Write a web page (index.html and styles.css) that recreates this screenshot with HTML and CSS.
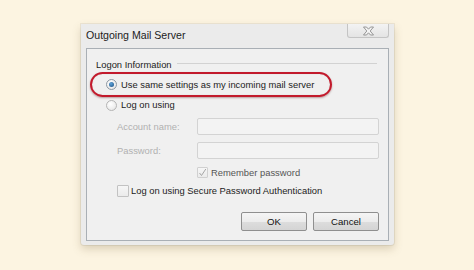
FILE: index.html
```html
<!DOCTYPE html>
<html lang="en">
<head>
    <meta charset="UTF-8">
    <meta name="viewport" content="width=device-width, initial-scale=1.0">
    <title>Outgoing Mail Server</title>
    <link rel="stylesheet" href="styles.css">
</head>
<body>
    <!-- Fenêtre de dialogue -->
    <div class="dialog">
        <div class="title-bar">
            <span class="title">Outgoing Mail Server</span>
            <div class="close-btn">
                <svg width="13" height="10" viewBox="0 0 13 10">
                    <path d="M1.5 1 L4.5 1 L6.5 3.2 L8.5 1 L11.5 1 L8.2 5 L11.5 9 L8.5 9 L6.5 6.8 L4.5 9 L1.5 9 L4.8 5 Z" fill="#f4f4f4" stroke="#8c8c8c" stroke-width="0.9" stroke-linejoin="round"/>
                </svg>
            </div>
        </div>

        <div class="panel">
            <div class="group-title">
                <span>Logon Information</span>
                <div class="group-line"></div>
            </div>

            <!-- Option surlignée -->
            <div class="highlight">
                <span class="radio checked"></span>
                <span class="label">Use same settings as my incoming mail server</span>
            </div>

            <div class="option">
                <span class="radio"></span>
                <span class="label">Log on using</span>
            </div>

            <div class="field">
                <span class="field-label">Account name:</span>
                <div class="input"></div>
            </div>

            <div class="field field-pass">
                <span class="field-label">Password:</span>
                <div class="input"></div>
            </div>

            <div class="remember">
                <span class="checkbox disabled">
                    <svg width="9" height="9" viewBox="0 0 9 9">
                        <path d="M1.5 5 L3.5 7.5 L7.8 1" fill="none" stroke="#a6a6a6" stroke-width="1"/>
                    </svg>
                </span>
                <span class="label muted">Remember password</span>
            </div>

            <div class="secure">
                <span class="checkbox"></span>
                <span class="label">Log on using Secure Password Authentication</span>
            </div>

            <div class="buttons">
                <div class="btn">OK</div>
                <div class="btn">Cancel</div>
            </div>
        </div>
    </div>
</body>
</html>
```

FILE: styles.css
```css
/* Fond crème */
body {
    margin: 0;
    padding: 0;
    width: 474px;
    height: 270px;
    overflow: hidden;
    background-color: #fcf4e1;
    font-family: 'Liberation Sans', Arial, sans-serif;
    color: #222222;
}

/* Fenêtre */
.dialog {
    margin-top: 24px;
    margin-left: 81px;
    width: 313px;
    height: 221px;
    box-sizing: border-box;
    background-color: #ebebeb;
    box-shadow: 0 0 0 1px rgba(0, 0, 0, 0.06), 0 4px 8px rgba(120, 100, 60, 0.25);
    border-radius: 0 0 3px 3px;
    display: flex;
    flex-direction: column;
}

.title-bar {
    height: 24px;
    display: flex;
    justify-content: space-between;
    align-items: flex-start;
    padding: 0 5px;
}

.title {
    padding-top: 5px;
    font-size: 10.6px;
    line-height: 13px;
    color: #1c1c1c;
}

.close-btn {
    width: 42px;
    height: 14px;
    box-sizing: border-box;
    border: 1px solid #c4c4c4;
    border-top: none;
    border-radius: 0 0 3px 3px;
    background: linear-gradient(#f3f3f3, #e4e4e4);
    display: flex;
    justify-content: center;
    align-items: center;
}

/* Panneau principal */
.panel {
    margin: 0 5px 4px 5px;
    height: 193px;
    box-sizing: border-box;
    border: 1px solid #a9afb5;
    background-color: #f0f0f0;
    padding-top: 9px;
    display: flex;
    flex-direction: column;
    font-size: 9.4px;
}

.group-title {
    height: 14px;
    line-height: 14px;
    display: flex;
    align-items: center;
    padding-left: 9px;
    padding-right: 11px;
    gap: 5px;
}

.group-line {
    flex: 1;
    height: 1px;
    margin-top: -3px;
    background-color: #d2d2d2;
}

/* Ovale rouge */
.highlight {
    margin-left: 3px;
    width: 242px;
    height: 25px;
    box-sizing: border-box;
    border: 2px solid #c21a2c;
    border-radius: 13px;
    box-shadow: 0 1px 2px rgba(80, 0, 0, 0.35), inset 0 0 1px rgba(80, 0, 0, 0.2);
    display: flex;
    align-items: center;
    padding-left: 14px;
    gap: 4px;
}

.option {
    height: 14px;
    margin-top: 1px;
    display: flex;
    align-items: center;
    padding-left: 19px;
    gap: 4px;
}

.label {
    line-height: 14px;
    white-space: nowrap;
}

.radio {
    width: 11px;
    height: 11px;
    box-sizing: border-box;
    border-radius: 50%;
    border: 1px solid #b4b4b4;
    background: radial-gradient(circle at 40% 35%, #ffffff, #e2e2e2);
    flex-shrink: 0;
    display: flex;
    justify-content: center;
    align-items: center;
}

.radio.checked {
    border-color: #8e98a2;
}

.radio.checked::after {
    content: '';
    width: 5px;
    height: 5px;
    border-radius: 50%;
    background: radial-gradient(circle at 40% 35%, #5fa2d8, #1b4f80);
}

/* Champs désactivés */
.field {
    margin-top: 6px;
    height: 17px;
    display: flex;
    align-items: center;
    padding-left: 30px;
    padding-right: 9px;
}

.field-pass {
    margin-top: 7px;
}

.field-label {
    width: 80px;
    color: #b0b0b0;
}

.input {
    flex: 1;
    height: 17px;
    box-sizing: border-box;
    border: 1px solid #d3d3d3;
    border-radius: 2px;
    background-color: #f3f3f3;
}

.muted {
    color: #555555;
}

.checkbox {
    width: 12px;
    height: 12px;
    box-sizing: border-box;
    border: 1px solid #c2c2c2;
    border-radius: 1px;
    background: linear-gradient(#f6f6f6, #ebebeb);
    flex-shrink: 0;
    display: flex;
    justify-content: center;
    align-items: center;
}

.checkbox.disabled {
    width: 11px;
    height: 11px;
    border-color: #d0d0d0;
}

.remember {
    margin-top: 8px;
    height: 11px;
    display: flex;
    align-items: center;
    padding-left: 110px;
    gap: 3px;
}

.secure {
    margin-top: 7px;
    height: 12px;
    display: flex;
    align-items: center;
    padding-left: 30px;
    gap: 2px;
}

/* Boutons */
.buttons {
    margin-top: 15px;
    display: flex;
    justify-content: flex-end;
    gap: 6px;
    padding-right: 9px;
}

.btn {
    width: 66px;
    height: 19px;
    box-sizing: border-box;
    border: 1px solid #8f8f8f;
    border-radius: 2px;
    background: linear-gradient(#f5f5f5 0%, #ececec 50%, #dddddd 51%, #d4d4d4 100%);
    text-align: center;
    line-height: 17px;
    font-size: 9.6px;
    color: #111111;
}
```
